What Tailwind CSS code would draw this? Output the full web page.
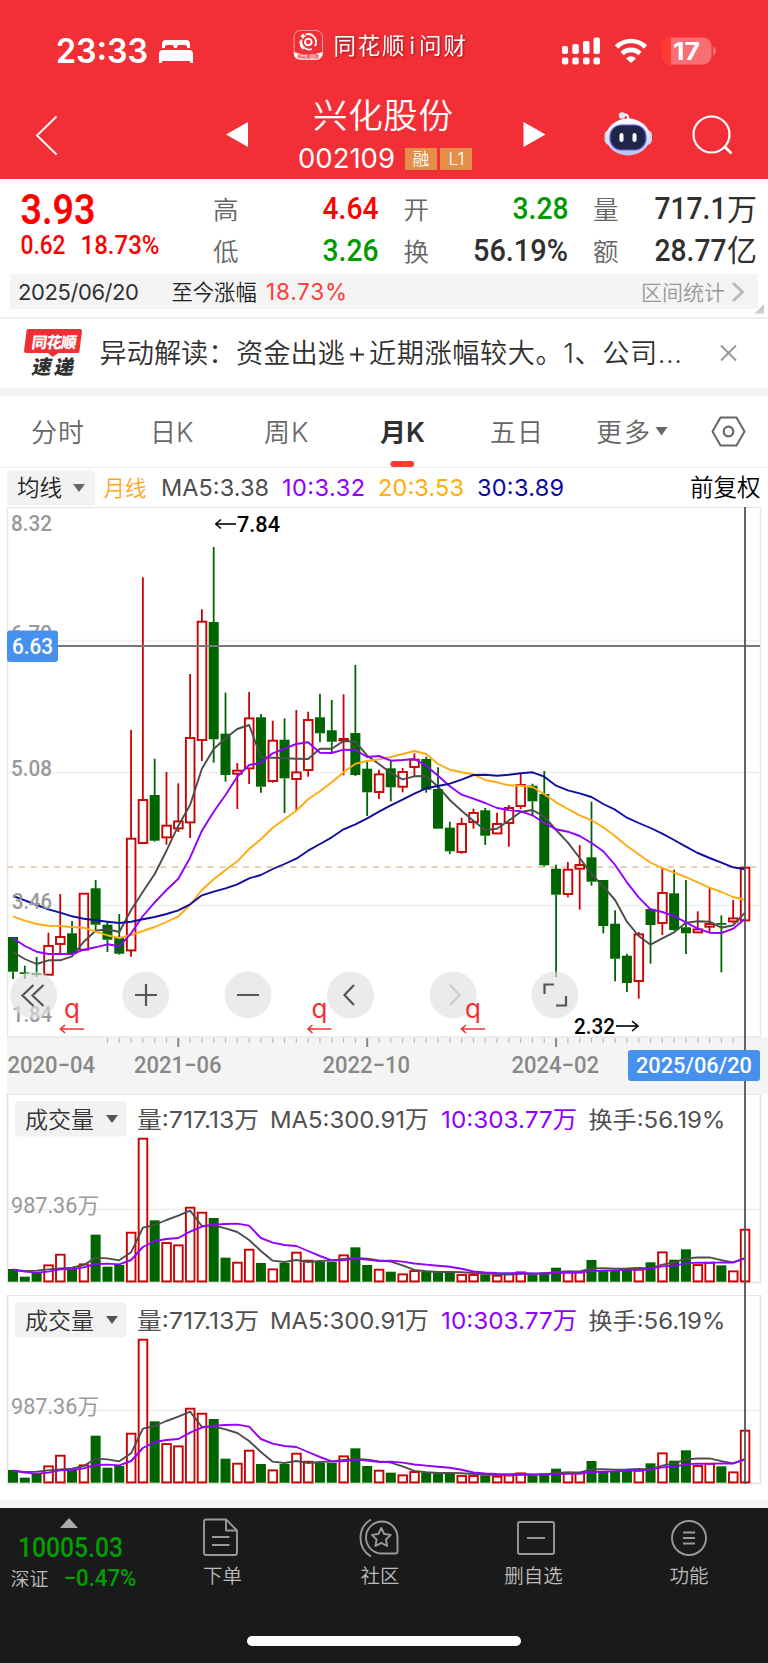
<!DOCTYPE html>
<html lang="zh-CN">
<head>
<meta charset="utf-8">
<title>兴化股份 002109</title>
<script src="https://cdn.jsdelivr.net/npm/@tailwindcss/browser@4"></script>
</head>
<body class="w-[768px] h-[1663px] overflow-hidden bg-white font-['Inter','Noto_Sans_CJK_SC',sans-serif]">

<header class="h-[179px] bg-[#f22f37] text-white">
<svg width="768" height="179" viewBox="0 0 768 179" fill="none" font-family="Inter, 'Noto Sans CJK SC', sans-serif">
  <text x="56" y="63" font-size="33.500" font-weight="600" fill="#fff" textLength="92" lengthAdjust="spacingAndGlyphs">23:33</text>
  <path fill="#fff" d="M162 48v-4q0-4 4-4h20q4 0 4 4v4h-3v-1q0-2-2-2h-6q-2 0-2 3h-3q0-3-2-3h-5q-2 0-2 2v1zM159 63v-9q0-4 4-4h26q4 0 4 4v9h-3v-2h-28v2z"/>
  <rect x="294" y="30.500" width="28.500" height="29" rx="6.500" stroke="#f99ca0" stroke-width="1"/>
  <path d="M294 52q14 5 28.500 0v1.500q0 6-6.500 6h-15.500q-6.500 0-6.500-6z" fill="#fff"/>
  <circle cx="308.300" cy="42" r="3.300" stroke="#fff" stroke-width="2"/>
  <path d="M305.500 34.500a8 8 0 0 1 9.500 11.500M312 49a8 8 0 0 1-10.500-9.500M300.500 41a8.500 8.500 0 0 0 3 8M303 34v4.500M300.700 36.200h4.600" stroke="#fff" stroke-width="1.800"/>
  <text x="308.300" y="57.800" font-size="4.300" font-weight="700" fill="#f22f37" text-anchor="middle">同花顺问财</text>
  <g style="filter:drop-shadow(1px 1.500px 1px rgba(90,0,0,.6))" font-size="22.500" font-weight="400" fill="#fff"><text x="333.500" y="53.500" textLength="71">同花顺</text><text x="409.500" y="53.500">i</text><text x="419" y="53.500" textLength="47">问财</text></g>
  <g fill="#fff">
    <rect x="562" y="46" width="6" height="8" rx="2"/><rect x="572.300" y="44" width="6.500" height="10" rx="2"/><rect x="583" y="41" width="6.500" height="13" rx="2"/><rect x="593.500" y="37.500" width="6.500" height="16.500" rx="2"/>
    <rect x="562" y="57.500" width="6.300" height="7" rx="2"/><rect x="572.300" y="57.500" width="6.500" height="7" rx="2"/><rect x="583" y="57.500" width="6.500" height="7" rx="2"/><rect x="593.500" y="57.500" width="6.500" height="7" rx="2"/>
    <path d="M631 63l5-4.500q-5-4.500-10 0z"/>
  </g>
  <path d="M616.500 47a20.500 20.500 0 0 1 29 0M622 53.500a13 13 0 0 1 18 0" stroke="#fff" stroke-width="4.600"/>
  <clipPath id="bat"><rect x="662" y="37.500" width="49.500" height="27" rx="8.500"/></clipPath>
  <g clip-path="url(#bat)"><rect x="662" y="37" width="50" height="28" fill="#f76e74"/><rect x="662" y="37" width="9" height="28" fill="#ff3b30"/></g>
  <path d="M713 46.500q3 1 3 4.500t-3 4.500z" fill="#f76e74"/>
  <text x="673" y="60" font-size="24.500" font-weight="700" fill="#fff" textLength="27" lengthAdjust="spacingAndGlyphs">17</text>

  <path d="M56.500 116.500L37 135.500l19.500 19" stroke="#fff" stroke-width="1.900"/>
  <path d="M226 134.500l22-12.500v25zM545.500 134.500l-22-12.500v25z" fill="#fff"/>
  <text x="313" y="127.500" font-size="34.500" font-weight="350" fill="#fff" textLength="140">兴化股份</text>
  <text x="298" y="167.500" font-size="27.500" font-weight="400" fill="#fff" textLength="97">002109</text>
  <rect x="405" y="148" width="32" height="22" fill="#e58e48"/><rect x="440" y="148" width="32" height="22" fill="#e58e48"/>
  <text x="421" y="165" font-size="16.500" font-weight="350" fill="#fff" text-anchor="middle">融</text>
  <text x="456.500" y="164.500" font-size="17.500" font-weight="350" fill="#fff" text-anchor="middle">L1</text>

  <defs><linearGradient id="rb" x1="0" y1="0" x2="0" y2="1"><stop offset="0" stop-color="#fff"/><stop offset=".6" stop-color="#d9def6"/><stop offset="1" stop-color="#b9c1ea"/></linearGradient></defs>
  <path d="M622 115q6-2 6.500 4" stroke="#fff" stroke-width="2.200"/><circle cx="622" cy="115.500" r="3.200" fill="#e6e6f6"/>
  <rect x="604.500" y="130" width="10" height="15" rx="5" fill="#ccd2ef"/><rect x="642" y="130" width="10" height="15" rx="5" fill="#ccd2ef"/>
  <ellipse cx="628" cy="137" rx="22" ry="18.500" fill="url(#rb)"/>
  <rect x="610" y="125" width="36" height="25" rx="11.500" fill="#1f2749" stroke="#6c5bea" stroke-width="1.200"/>
  <rect x="619.500" y="133" width="4" height="9" rx="2" fill="#fff"/><rect x="632.500" y="133" width="4" height="9" rx="2" fill="#fff"/>
  <circle cx="711.500" cy="134.500" r="18" stroke="#fff" stroke-width="2.200"/><path d="M724.500 146.500l7 7" stroke="#fff" stroke-width="2.600"/>
</svg>
</header>

<section class="h-[138px] pt-[12px] px-[10px]">
  <svg class="-ml-[10px] block overflow-visible" width="768" height="83" viewBox="0 191 768 83" font-family="Roboto, 'Noto Sans CJK SC', sans-serif">
    <g fill="#ff0000" font-weight="500">
      <text x="20.500" y="224" font-size="43" font-weight="600" textLength="75" lengthAdjust="spacingAndGlyphs">3.93</text>
      <text x="20.500" y="253.500" font-size="25.500" textLength="45" lengthAdjust="spacingAndGlyphs">0.62</text>
      <text x="80.500" y="253.500" font-size="25.500" textLength="79" lengthAdjust="spacingAndGlyphs">18.73%</text>
      <text x="322.500" y="218.500" font-size="31" textLength="56" lengthAdjust="spacingAndGlyphs">4.64</text>
    </g>
    <g fill="#666" font-size="25.500" font-weight="350">
      <text x="213" y="219">高</text><text x="213" y="261">低</text>
      <text x="403.500" y="219">开</text><text x="403.500" y="261">换</text>
      <text x="593" y="219">量</text><text x="593" y="261">额</text>
    </g>
    <g font-size="31" font-weight="500" fill="#009900">
      <text x="322.500" y="260.500" textLength="56" lengthAdjust="spacingAndGlyphs">3.26</text>
      <text x="512.500" y="218.500" textLength="56" lengthAdjust="spacingAndGlyphs">3.28</text>
    </g>
    <g font-size="31" font-weight="500" fill="#303030">
      <text x="473" y="260.500" textLength="95" lengthAdjust="spacingAndGlyphs">56.19%</text>
      <text x="654.500" y="218.500" textLength="72" lengthAdjust="spacingAndGlyphs">717.1</text>
      <text x="654.500" y="260.500" textLength="72" lengthAdjust="spacingAndGlyphs">28.77</text>
      <text x="727" y="219.500" font-size="30" font-weight="400">万</text><text x="727" y="261" font-size="30" font-weight="400">亿</text>
    </g>
  </svg>
  <div class="h-[35px] w-[748px] bg-[#f4f4f4]">
  <svg class="-ml-[10px] block overflow-visible" width="768" height="35" viewBox="0 274 768 35" font-family="Inter, 'Noto Sans CJK SC', sans-serif">
    <text x="18" y="299.500" font-size="22" font-weight="400" fill="#303030" textLength="121">2025/06/20</text>
    <text x="171.500" y="299.500" font-size="21.300" font-weight="350" fill="#222">至今涨幅</text>
    <text x="266" y="300" font-size="22.500" font-weight="400" fill="#ff3b35" textLength="81">18.73%</text>
    <text x="641" y="299.500" font-size="21" font-weight="350" fill="#999">区间统计</text>
    <path d="M733 283l9.500 9-9.500 9" fill="none" stroke="#bbb" stroke-width="3"/>
    <path d="M764 304v9.500h-9.500z" fill="#ccc"/>
  </svg>
  </div>
</section>

<section class="h-[71px] border-t-2 border-[#efefef] flex items-center">
  <svg class="block" width="768" height="69" viewBox="0 319 768 69" font-family="Inter, 'Noto Sans CJK SC', sans-serif">
    <path d="M28.500 329h51.500q2 0 2 2l-2.500 20q0 2-2 2h-19l-6 4-4.500-4h-22q-2 0-2-2l2.500-20q0-2 2-2z" fill="#ed3033"/>
    <g transform="translate(31 347.500) skewX(-8)"><text font-size="15.500" font-weight="900" fill="#fff" textLength="45">同花顺</text></g>
    <g transform="translate(31 374) skewX(-12)"><text font-size="19.500" font-weight="900" fill="#303030" textLength="42">速递</text></g>
    <text x="99.500" y="363" font-size="27.200" font-weight="350" fill="#303030">异动解读：</text>
    <text x="236" y="363" font-size="27.200" font-weight="350" fill="#303030" textLength="109">资金出逃</text>
    <path d="M350 354.500h14M357 347.500v14" stroke="#303030" stroke-width="1.900"/>
    <text x="369" y="363" font-size="27.200" font-weight="350" fill="#303030" textLength="313">近期涨幅较大。1、公司...</text>
    <path d="M721 345.500l15 15M736 345.500l-15 15" stroke="#999" stroke-width="2"/>
  </svg>
</section>
<div class="h-[8px] bg-[#f4f4f4]"></div>

<nav class="h-[72px] border-b border-[#ececec]">
  <svg class="block" width="768" height="71" viewBox="0 396 768 71" font-size="26" font-weight="350" fill="#666" font-family="Inter, 'Noto Sans CJK SC', sans-serif">
    <text x="31" y="442" textLength="53">分时</text>
    <text x="150" y="442">日<tspan x="176" font-size="27">K</tspan></text>
    <text x="264" y="442">周<tspan x="291" font-size="27">K</tspan></text>
    <text x="380" y="442" font-weight="600" fill="#303030">月<tspan x="406" font-size="27">K</tspan></text>
    <text x="490" y="442" textLength="53">五日</text>
    <text x="596" y="442" textLength="54">更多</text>
    <path d="M655.500 427h12l-6 8.500z"/>
    <path d="M720.500 417.500h16l8 14-8 14h-16l-8-14z" fill="none" stroke="#666" stroke-width="2" stroke-linejoin="round"/>
    <circle cx="728.500" cy="431.500" r="4.800" fill="none" stroke="#666" stroke-width="2.200"/>
    <rect x="390.500" y="461" width="23.500" height="6" rx="2.500" fill="#ff3b30"/>
  </svg>
</nav>

<section class="h-[39px]">
  <svg class="block" width="768" height="39" viewBox="0 468 768 39" font-size="23.500" font-weight="400" font-family="Inter, 'Noto Sans CJK SC', sans-serif">
    <rect x="7" y="470.500" width="88" height="35" rx="4" fill="#f2f2f2"/>
    <text x="17" y="496" font-size="22.500" font-weight="350" fill="#222">均线</text>
    <path d="M73 484h12l-6 8z" fill="#666"/>
    <text x="103.500" y="496" font-size="21.500" font-weight="350" fill="#ffa81c">月线</text>
    <text x="161" y="496" fill="#4d4d4d" textLength="108">MA5:3.38</text>
    <text x="282" y="496" fill="#9000ff" textLength="83">10:3.32</text>
    <text x="378" y="496" fill="#ffae0c" textLength="86">20:3.53</text>
    <text x="477" y="496" fill="#0a0aa0" textLength="87">30:3.89</text>
    <text x="690" y="496" font-size="23.500" font-weight="350" fill="#000">前复权</text>
  </svg>
</section>

<section class="h-[587px]">
  <svg id="kline" class="block" width="768" height="587" viewBox="0 507 768 587" font-family="Roboto, sans-serif"></svg>
</section>

<section class="h-[201px]">
  <svg id="vol1" class="block" width="768" height="201" viewBox="0 1094 768 201" font-family="Inter, 'Noto Sans CJK SC', sans-serif"></svg>
</section>
<section class="h-[205px]">
  <svg id="vol2" class="block" width="768" height="205" viewBox="0 1094 768 205" font-family="Inter, 'Noto Sans CJK SC', sans-serif"></svg>
</section>
<div class="h-[8px] bg-[#f4f4f4]"></div>

<footer class="h-[155px] bg-[#1a1a1a]">
  <svg class="block" width="768" height="155" viewBox="0 1508 768 155" font-family="Roboto, 'Noto Sans CJK SC', sans-serif">
    <path d="M60 1528l9-10 9 10z" fill="#aaa"/>
    <text x="18" y="1557" font-size="27" font-weight="500" fill="#00a000" textLength="105" lengthAdjust="spacingAndGlyphs">10005.03</text>
    <text x="10.500" y="1586" font-size="19" font-weight="350" fill="#bbb">深证</text>
    <text x="63.500" y="1585.500" font-size="23" font-weight="500" fill="#00a000" textLength="73" lengthAdjust="spacingAndGlyphs">−0.47%</text>
    <g fill="none" stroke="#999" stroke-width="1.900" stroke-linejoin="round">
      <path d="M206 1519.500h20l11 11v22q0 2.500-2 2.500h-29q-2 0-2-2.500v-31q0-2 2-2zM226 1519.500v11h11M212 1537h17.500M212 1545h17.500"/>
      <path d="M382 1521.500a16 16 0 0 0 0 32h13.500q2 0 2-2v-14a15.700 16 0 0 0-15.500-16zM371 1519.500a21.500 21.500 0 0 0 0 37"/>
      <path d="M381.300 1528l2.900 6 6.500.9-4.700 4.600 1.100 6.500-5.800-3.100-5.800 3.100 1.100-6.500-4.700-4.600 6.500-.9z"/>
      <rect x="518" y="1522" width="36" height="32" rx="2"/><path d="M527 1538h18"/>
      <circle cx="689" cy="1538" r="17"/><path d="M683 1532.500h12M683 1538h12M683 1543.500h12"/>
    </g>
    <g font-size="19.500" font-weight="350" fill="#bbb" text-anchor="middle">
      <text x="222.500" y="1582.500">下单</text><text x="380" y="1582.500">社区</text><text x="533.500" y="1582.500">删自选</text><text x="689" y="1582.500">功能</text>
    </g>
    <rect x="247" y="1636" width="274" height="10" rx="5" fill="#fff"/>
  </svg>
</footer>

<script>
const X = i => 13 + i * 11.806;
const R = '#cc0000', G = '#006400';
// colour, high, body top, body bottom, low
const K = [['g',937,937,971.7,979],['g',965.7,972.3,974,979],['g',957,973,975,977],['r',932.7,945.3,975,975],['r',894,936.3,944.3,954],['g',921,933.3,954,954],['r',893,893,950,950],['g',880,888.3,924.7,930],['g',921.7,924.7,939.7,952],['g',914,937.7,953.7,954.7],['r',730,838,950.7,956.7],['r',577.3,799.3,843.3,843.3],['g',758.7,795,840.7,841.7],['r',772,825,837.7,844.7],['r',783.3,820.7,828.7,832],['r',674,737.3,822.7,838],['r',609.3,621,740.3,761],['g',547,622,739.3,762.7],['g',692.7,733.7,775,781.7],['r',763,770,774,809],['r',692,717.7,768.7,784],['g',714,717.3,786.7,792.7],['r',720.7,740,781.3,782.7],['g',718.3,739.7,778.3,813],['r',710,771.7,779.3,810.7],['r',711.7,719.3,770.3,776.7],['g',693.7,717.3,733.3,742.3],['g',700,730.3,741.7,753.3],['r',694.3,738.3,740.7,775.3],['g',665,733,775,776],['g',761.7,768.7,792.3,816],['r',769.7,773.7,792.3,799],['g',761,768.3,787.3,801.3],['r',768,771.3,787,792.3],['r',753.3,759,767.3,776],['g',756.7,759,789.7,792.7],['g',767.3,789,828.7,828.7],['g',821.7,827.7,851.3,854],['r',817.7,823.3,852.3,853.7],['r',808.7,812.3,822.3,828.7],['g',808,810.3,835.7,845],['r',812.7,823.3,833.7,833.7],['r',805,807.3,823.3,846.7],['r',773.3,784.3,806.3,809],['g',783.7,785.7,801.3,816],['g',771,794,865.3,866.7],['g',864.7,868.7,894.7,977],['r',862,869,894.3,897.3],['r',845,864.3,869,909.7],['g',801.7,857.3,881.7,885.7],['g',880,880,926,933.3],['g',910.3,923.7,958.7,981.3],['g',953.7,955.7,983,992],['r',932,933.7,981.3,998.7],['g',908,909,925,963.7],['r',868,892.3,923.3,935],['g',869.7,893.3,930,930.7],['g',880,927.3,933.3,954],['r',911.3,928.7,932.7,932.7],['r',888.3,923.3,927,932.7],['g',915.3,923,924.7,972.3],['r',900,917.7,921.7,923.3],['r',867,867,920.7,920.7]];
const MA = {
 '#4d4d4d':[952,959,964,960.3,960.3,956.3,941.7,930.7,929.3,932,910,891.7,874,850.7,825.7,805,768.7,749,738.3,729,725,757,757.7,758.3,758.7,759,748.7,748.7,741,741.7,755.7,764,773,779.3,776.3,776,786.7,800,810.7,820.7,830,828.7,820.5,812,810,816.7,830,842.7,858,874,886.7,900,921.7,936,944.7,938.3,932.3,922.7,921.3,921.7,927.7,925.3,912.7],
 '#ffaa11':[916.3,920.7,924,925.7,926,927,927.7,931.7,935.3,938,935,931,927,922,916.3,905,890,879.3,870,861.3,849,839.3,827.7,819.3,810.7,799.3,791.3,782.3,772.3,763.7,761,759.3,757,754,751,754,764,769.7,772.3,774.3,780,782.3,785.3,785.7,787,794.3,802.3,809,815.3,820.3,827.3,836.3,846,854.3,862.7,868,872.7,877,882.3,887.7,892,897,899.7],
 '#9400ff':[938,946,951.7,954,954,954,949.7,947.3,944.3,946.3,933.3,916,902.3,890,878.7,857.7,830.7,811.7,795,776.7,765,763,753.3,748.7,744,742.3,752.7,753,749.7,750,757,756,760.7,760,759,765.7,775.7,786.3,794.7,798.7,803,808,810,811.3,815.3,823,829.3,831.7,836,843,851.3,865,882.3,897.3,909.3,912,916,922.3,928.7,932.7,933,928.7,918.7],
 '#0e0ea0':[896,900.3,905,909.3,912.7,916.3,918.7,920.3,921.7,923,921.7,919.3,917,914,910.3,904.3,895.3,891.7,888.3,884.3,878.3,875,869,864,858.7,850.7,844,837.3,829.3,824.3,818.3,811.7,805.3,799.7,793.7,788.3,786,783.7,779.7,775,774.7,775.7,774.7,773.3,772.3,776.7,785.7,790.3,793.3,797,804,809.7,817.7,823,828,833.7,840,846.7,853,858,862.7,867.3,869.3]
};
const line = (x1,y1,x2,y2,c,w,e='') => `<path d="M${x1} ${y1}L${x2} ${y2}" stroke="${c}" stroke-width="${w}" fill="none" ${e}/>`;
const txt = (x,y,s,z,c,w,e='') => `<text x="${x}" y="${y}" font-size="${z}" fill="${c}" ${w?`textLength="${w}" lengthAdjust="spacingAndGlyphs"`:''} ${e}>${s}</text>`;
const box = (i,c,t,b) => c==='g' ? `<rect x="${X(i)-5}" y="${t}" width="10" height="${Math.max(1.5,b-t)}" fill="${G}"/>`
 : `<rect x="${X(i)-4.2}" y="${t+.7}" width="8.600" height="${Math.max(1,b-t-1)}" fill="none" stroke="${R}" stroke-width="1.900"/>`;
const curve = (a,c) => `<polyline points="${a.map((y,i)=>X(i).toFixed(1)+','+y).join(' ')}" fill="none" stroke="${c}" stroke-width="1.900" stroke-linejoin="round"/>`;

let s = '<rect x="7" y="1037" width="761" height="57" fill="#f4f4f4"/>';
for (const y of [640.5,772.5,905.5]) s += line(8,y,760,y,'#efefef',1.5);
s += '<rect x="7.500" y="507.500" width="753" height="529.500" fill="none" stroke="#e8e8e8" stroke-width="1.500"/>';
s += line(7,867,760,867,'#e9d0b4',1.8,'stroke-dasharray="6 5.8"');
s += txt(11,531,'8.32',22,'#999',41,'font-weight="500"') + txt(11,641,'6.70',22,'#999',41,'font-weight="500"') + txt(11,776,'5.08',22,'#999',41,'font-weight="500"');
s += txt(12,1021.5,'1.84',22,'#999',40,'font-weight="500"');
K.forEach(([c,h,t,b,l],i)=>{ const q = c==='g'?G:R;
 if (t>h) s += line(X(i),h,X(i),t+.5,q,1.8);
 if (l>b) s += line(X(i),b,X(i),l,q,1.8);
 s += box(i,c,t,b); });
for (const c in MA) s += curve(MA[c],c);
s += txt(12,908.5,'3.46',22,'#999',40,'font-weight="500"');
s += line(7,646,760,646,'#777',2) + line(745,507,745,1094,'#555',1.8);
s += '<rect x="7" y="630.500" width="51" height="31.500" rx="3" fill="#4691ee"/>' + txt(12,653.5,'6.63',22.5,'#fff',41,'font-weight="500"');
s += line(216,524,236,524,'#000',1.6) + line(221,519.5,215.5,524,'#000',1.6) + line(221,528.5,215.5,524,'#000',1.6) + txt(237,532,'7.84',22.5,'#000',43,'font-weight="500"');
s += txt(574,1034,'2.32',22.5,'#000',41,'font-weight="500"') + line(616,1026,637,1026,'#000',1.6) + '<path d="M632 1021l6 5-6 5" fill="none" stroke="#000" stroke-width="1.600"/>';
for (const x of [33.7,145.7,248,350.5,453,555]) s += `<circle cx="${x}" cy="995" r="23.500" fill="#e0e0e0" fill-opacity=".66"/>`;
s += '<path d="M33.500 985l-11 10.500 11 10.500M43.500 985l-11 10.500 11 10.500M135 995h22M146 984v22M237 995h22M354 985l-9.500 10 9.500 10M554 984.500h-9.500v9.500M556 1005.500h10v-9.500" fill="none" stroke="#555" stroke-width="2.200"/><path d="M450 985l9.500 10-9.500 10" fill="none" stroke="#ccc" stroke-width="2.200"/>';
for (const x of [72,319.5,473]) s += txt(x,1018,'q',26,'#f03030',0,'text-anchor="middle" font-family="Inter"') + `<path d="M${x+12} 1029h-23M${x-7} 1025l-4.500 4 4.500 4" fill="none" stroke="#f03030" stroke-width="1.600"/>`;
for (let i=8;i<62;i++) { const b=[14,30,46].includes(i); s += line(X(i),1038,X(i),b?1047:1043,b?'#888':'#bbb',b?2:1.2); }
for (const [x,t] of [[7.5,'2020−04'],[134,'2021−06'],[322.5,'2022−10'],[511.5,'2024−02']]) s += txt(x,1072.5,t,23,'#888',87.5,'font-weight="500"');
s += '<rect x="628" y="1050" width="132" height="31" rx="3" fill="#4691ee"/>'+txt(636,1073,'2025/06/20',22.5,'#fff',116,'font-weight="500"');
document.getElementById('kline').innerHTML = s;

const V = [552,575,562,539,507,552,536,449,545,540,441,159,406,472,479,366,381,399,518,531,492,534,551,534,501,525,530,530,509,487,540,552,560,566,556,560,562,562,568,568,568,570,566,560,568,562,548,558,560,525,556,555,555,552,532,500,524,493,538,531,541,557,432];
const H = V.map(v=>590-v);
const avg = (i,n) => 590 - H.slice(i-n+1,i+1).reduce((a,b)=>a+b)/n;
const V5 = [555,558,557,553,550,548,540,518,520,526,502,428,420,405,392,377,423,421,430,441,465,498,527,531,525,531,528,526,522,519,521,526];
const V10 = [553,560,563,560,553,552,547,537,536,538,525,486,468,462,459,440,425,419,417,416,422,459,473,480,483,498,513,526,526,521,524,528];
for (let i=32;i<63;i++) { V5.push(avg(i,5)); V10.push(avg(i,10)); }
const C = K.map(k=>k[0]);
function vol(id, gap) {
 const y = v => 1085 + v/3;
 let s = '<rect x="7.500" y="1094" width="753" height="188.500" fill="none" stroke="#e4e4e4" stroke-width="1.800"/>' + line(8,1209.5,760,1209.5,'#ececec',1.3);
 s += txt(11,1213,'987.36万',21.5,'#999',88,`font-family="Roboto, 'Noto Sans CJK SC'"`);
 V.forEach((v,i)=>{ s += box(i,C[i],y(v),1281.7); });
 s += curve(V5.map(y),'#4d4d4d') + curve(V10.map(y),'#9400ff');
 s += line(745,1094,745,gap,'#555',1.8);
 s += '<rect x="15" y="1101" width="111.500" height="35.500" rx="4" fill="#f2f2f2"/><path d="M106 1115h12l-6 8z" fill="#555"/>';
 const w = 'font-weight="370"';
 s += txt(25,1128,'成交量',23,'#333',0,'font-weight="350"') + txt(137,1128,'量:717.13万',23,'#505050',122,w) + txt(270,1128,'MA5:300.91万',23.5,'#505050',159,w) + txt(441,1128,'10:303.77万',23.5,'#9000ff',136,w) + txt(588.5,1128,'换手:56.19%',22.5,'#505050',137,w);
 document.getElementById(id).innerHTML = s;
}
vol('vol1', 1295); vol('vol2', 1283);
</script>
</body>
</html>
